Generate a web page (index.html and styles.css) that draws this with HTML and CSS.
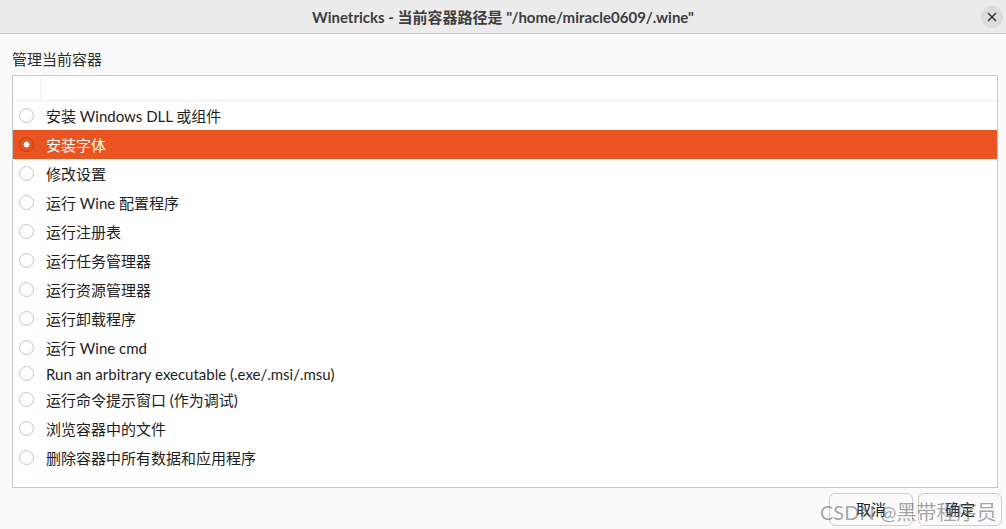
FILE: index.html
```html
<!DOCTYPE HTML>
<html>
<head>
<title>Winetricks</title>
<meta charset="utf-8" />
<link rel="stylesheet" href="styles.css">
</head>
<body>
<div class="window">
  <div class="titlebar">
    <span></span>
    <span class="title">Winetricks - 当前容器路径是 "/home/miracle0609/.wine"</span>
    <span class="close">
      <svg width="10" height="10" viewBox="0 0 10 10"><path d="M1 1L9 9M9 1L1 9" stroke="#2e2e2e" stroke-width="1.4"/></svg>
    </span>
  </div>
  <div class="content">
    <div class="label">管理当前容器</div>
    <div class="list">
      <div class="head"><div class="head-cell"></div></div>
      <!-- 每一行一个单选项 -->
      <div class="row"><span class="radio"></span>安装 Windows DLL 或组件</div>
      <div class="row selected"><span class="radio"></span>安装字体</div>
      <div class="row"><span class="radio"></span>修改设置</div>
      <div class="row"><span class="radio"></span>运行 Wine 配置程序</div>
      <div class="row"><span class="radio"></span>运行注册表</div>
      <div class="row"><span class="radio"></span>运行任务管理器</div>
      <div class="row"><span class="radio"></span>运行资源管理器</div>
      <div class="row"><span class="radio"></span>运行卸载程序</div>
      <div class="row"><span class="radio"></span>运行 Wine cmd</div>
      <div class="row latin"><span class="radio"></span>Run an arbitrary executable (.exe/.msi/.msu)</div>
      <div class="row"><span class="radio"></span>运行命令提示窗口 (作为调试)</div>
      <div class="row"><span class="radio"></span>浏览容器中的文件</div>
      <div class="row"><span class="radio"></span>删除容器中所有数据和应用程序</div>
    </div>
    <div class="buttons">
      <a href="javascript:;" class="btn">取消</a>
      <a href="javascript:;" class="btn">确定</a>
    </div>
  </div>
  <div class="mark">CSDN @黑带程序员</div>
</div>
</body>
</html>
```

FILE: styles.css
```css
*{
  margin:0;
  padding:0;
  box-sizing:border-box;
}
body{
  width:1006px;
  height:529px;
  overflow:hidden;
  font-family:Lato,"Noto Sans CJK SC",sans-serif;
  font-size:15px;
  color:#1e1e1e;
  background:#fafafa;
}
.window{
  position:relative;
  height:529px;
  display:flex;
  flex-direction:column;
}
.titlebar{
  height:34px;
  background:#ebebeb;
  border-bottom:1px solid #c4c4c4;
  display:grid;
  grid-template-columns:1fr auto 1fr;
  align-items:center;
}
.title{
  font-weight:bold;
  color:#3d3d3d;
  font-size:15px;
}
.close{
  justify-self:end;
  margin-right:3px;
  width:22px;
  height:22px;
  border-radius:50%;
  background:#dcdcdc;
  display:flex;
  align-items:center;
  justify-content:center;
}
.content{
  flex:1;
  display:flex;
  flex-direction:column;
  padding:0 4px 3px 12px;
}
.label{
  margin-top:15px;
  line-height:20px;
  height:20px;
  color:#2e2e2e;
}
.list{
  margin-top:6px;
  margin-right:4px;
  height:413px;
  background:#fff;
  border:1px solid #c8c8c8;
}
.head{
  height:25px;
  border-bottom:1px solid #f0f0f0;
}
.head-cell{
  width:28px;
  height:24px;
  border-right:1px solid #f0f0f0;
}
.row{
  height:29px;
  display:flex;
  align-items:center;
  padding-left:6px;
  gap:12px;
  white-space:nowrap;
}
.row.latin{
  height:23px;
}
.radio{
  width:15px;
  height:15px;
  border-radius:50%;
  border:1px solid #c6c6c6;
  background:#fff;
  flex:none;
}
.selected{
  background:#e95420;
  color:#fff;
}
.selected .radio{
  background:#e95420 radial-gradient(circle,#fff 0 2.6px,transparent 3.2px);
  border-color:#b8401a;
}
.buttons{
  margin-top:5px;
  display:flex;
  justify-content:flex-end;
  gap:5px;
}
.btn{
  width:84px;
  height:33px;
  line-height:31px;
  text-align:center;
  border:1px solid #cdcdcd;
  border-radius:6px;
  background:#fafafa;
  color:#1e1e1e;
  text-decoration:none;
}
.mark{
  position:absolute;
  left:820px;
  top:497px;
  font-size:20px;
  color:rgba(90,90,90,0.55);
  white-space:nowrap;
}
```
